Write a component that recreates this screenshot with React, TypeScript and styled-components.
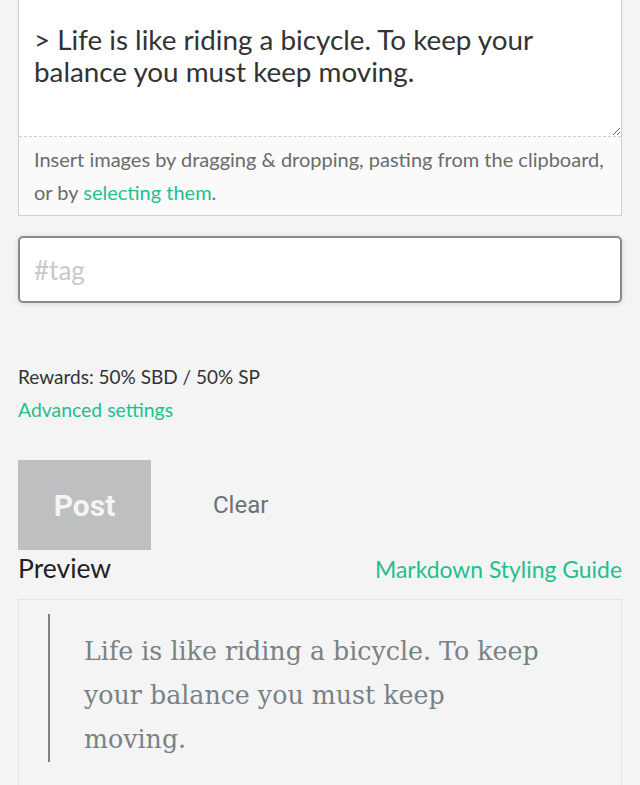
import React from "react";
import styled, { createGlobalStyle } from "styled-components";

const Global = createGlobalStyle`
  html, body { margin: 0; padding: 0; background: #f4f4f4; }
  body { font-family: "Lato", "Liberation Sans", sans-serif; overflow: hidden; }
`;

const Page = styled.div`
  padding: 0 18px;
  display: flex;
  flex-direction: column;
`;

const Editor = styled.div`
  margin-top: -30px;
  border: 1px solid #cfcfcf;
  display: flex;
  flex-direction: column;
`;

const TextArea = styled.textarea`
  display: block;
  box-sizing: border-box;
  height: 166px;
  width: 100%;
  border: none;
  border-bottom: 1px dashed #cfcfcf;
  background: #fff;
  padding: 53px 30px 0 15px;
  margin: 0;
  font-family: "Lato", "Liberation Sans", sans-serif;
  font-size: 27.8px;
  line-height: 32px;
  color: #333;
  outline: none;
  resize: vertical;
`;

const Hint = styled.div`
  background: #fafafa;
  padding: 6px 15px 6px;
  font-size: 20px;
  line-height: 33px;
  color: #6b6b6b;
`;

const Link = styled.a`
  color: #1fbf8f;
  text-decoration: none;
`;

const TagInput = styled.input`
  box-sizing: border-box;
  margin-top: 20px;
  height: 67px;
  width: 100%;
  border: 2px solid #8a8a8a;
  border-radius: 5px;
  background: #fff;
  box-shadow: 0 1px 5px rgba(0, 0, 0, 0.12);
  padding: 0 14px;
  font-family: "Lato", "Liberation Sans", sans-serif;
  font-size: 26px;
  color: #333;
  outline: none;
  &::placeholder { color: #c9c9c9; }
`;

const Rewards = styled.div`
  margin-top: 59px;
  font-size: 19px;
  line-height: 30px;
  color: #333;
`;

const Advanced = styled(Link)`
  font-size: 19.4px;
  line-height: 36px;
  align-self: flex-start;
`;

const Buttons = styled.div`
  margin-top: 32px;
  display: flex;
  align-items: center;
  gap: 62px;
`;

const PostButton = styled.button`
  width: 133px;
  height: 90px;
  border: none;
  background: #bebfc0;
  color: #f4f4f4;
  font-family: "Roboto", sans-serif;
  font-weight: 700;
  font-size: 30px;
  padding: 0;
`;

const ClearButton = styled.button`
  border: none;
  background: transparent;
  padding: 0;
  font-family: "Roboto", sans-serif;
  font-size: 24px;
  color: #6b737a;
`;

const PreviewHeader = styled.div`
  display: flex;
  justify-content: space-between;
  align-items: baseline;
  height: 49px;
`;

const PreviewTitle = styled.div`
  font-size: 26.5px;
  line-height: 36px;
  color: #222;
`;

const GuideLink = styled(Link)`
  font-size: 22.9px;
  line-height: 36px;
`;

const PreviewBox = styled.div`
  border: 1px solid #e3e3e3;
  padding: 14px 0 40px 29px;
`;

const Quote = styled.blockquote`
  margin: 0;
  border-left: 2px solid #7b838a;
  padding: 16px 77px 0 34px;
  font-family: "DejaVu Serif", "Liberation Serif", serif;
  font-size: 25.3px;
  line-height: 44px;
  color: #788187;
`;

export default function App() {
  return (
    <>
      <Global />
      <Page>
        <Editor>
          <TextArea defaultValue={"> Life is like riding a bicycle. To keep your balance you must keep moving."} />
          <Hint>
            Insert images by dragging &amp; dropping, pasting from the clipboard, or by{" "}
            <Link href="#">selecting them</Link>.
          </Hint>
        </Editor>
        <TagInput placeholder="#tag" />
        <Rewards>Rewards: 50% SBD / 50% SP</Rewards>
        <Advanced href="#">Advanced settings</Advanced>
        <Buttons>
          <PostButton>Post</PostButton>
          <ClearButton>Clear</ClearButton>
        </Buttons>
        <PreviewHeader>
          <PreviewTitle>Preview</PreviewTitle>
          <GuideLink href="#">Markdown Styling Guide</GuideLink>
        </PreviewHeader>
        <PreviewBox>
          <Quote>Life is like riding a bicycle. To keep your balance you must keep moving.</Quote>
        </PreviewBox>
      </Page>
    </>
  );
}
